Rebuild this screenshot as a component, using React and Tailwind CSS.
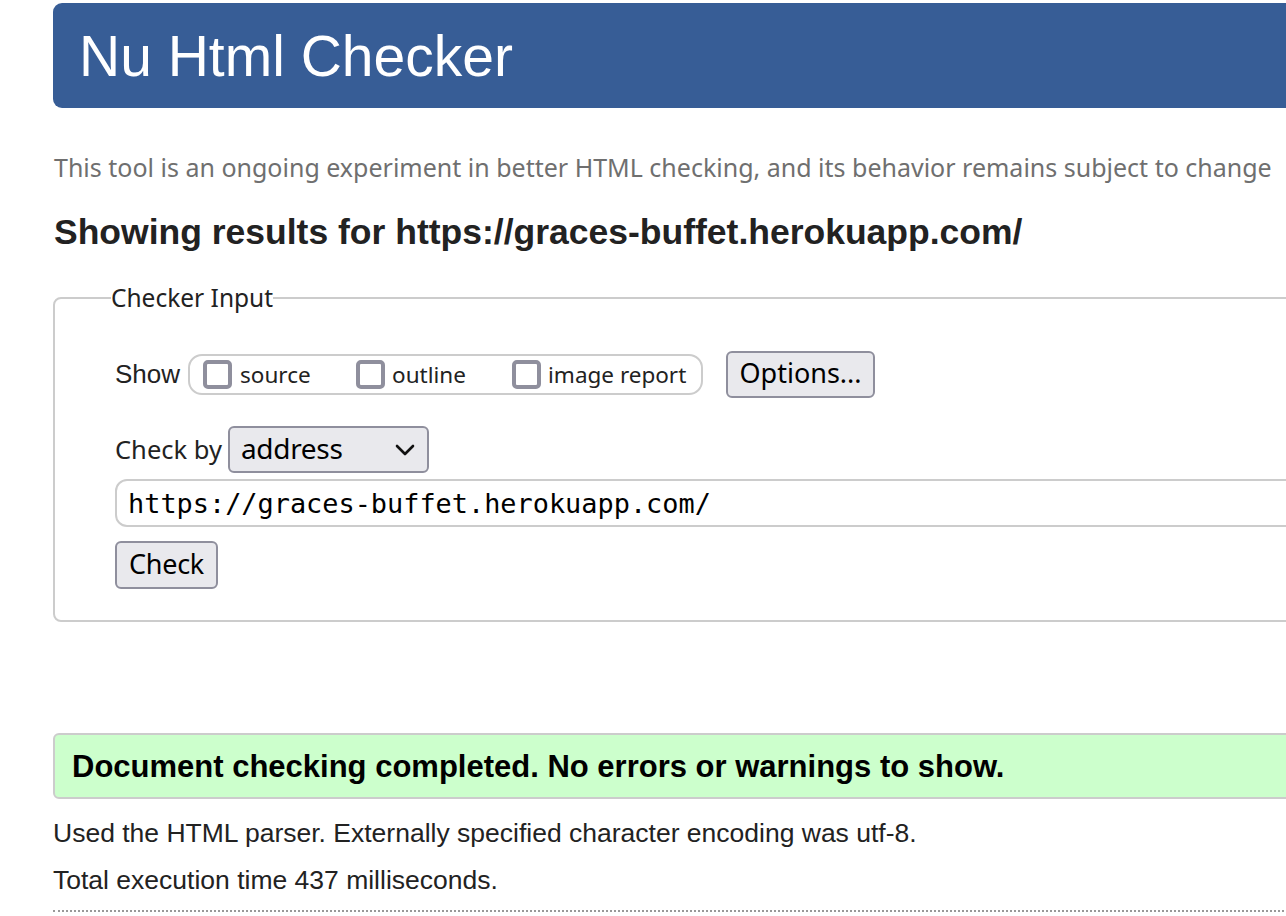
import React from "react";

function Box() {
  return (
    <span className="inline-block w-[29px] h-[29px] border-[4px] border-[#8f8f9d] rounded-[5px] bg-white shrink-0" />
  );
}

export default function App() {
  return (
    <div className="w-[1286px] h-[916px] overflow-hidden bg-white">
      <div className="pl-[53px] w-[1500px]">
        <div className="mt-[3px] h-[105px] bg-[#375d96] rounded-l-[9px] flex items-center pl-[26px]">
          <h1 className="text-white text-[57px] leading-none font-['Liberation_Sans',Arial,sans-serif] mt-[2px]">Nu Html Checker</h1>
        </div>

        <p className="mt-[42px] pl-px text-[#6f6f6f] text-[25px] leading-[34px] font-['Noto_Sans',sans-serif]">
          This tool is an ongoing experiment in better HTML checking, and its behavior remains subject to change
        </p>

        <h2 className="mt-[28px] pl-px text-[#222222] text-[35.5px] leading-[40px] font-bold font-['Liberation_Sans',Arial,sans-serif]">
          Showing results for https://graces-buffet.herokuapp.com/
        </h2>

        <fieldset className="mt-[30px] border-2 border-[#cccccc] rounded-l-[8px] pl-[60px] pr-4 h-[340px] font-['Noto_Sans',sans-serif]">
          <legend className="ml-[-4px] px-0 text-[24.5px] leading-[32px] text-[#222]">Checker Input</legend>

          <div className="mt-[37px] flex items-center">
            <span className="text-[26px] text-[#222] font-['Liberation_Sans',Arial,sans-serif] mr-[8px]">Show</span>
            <div className="h-[41px] w-[515px] border-2 border-[#cccccc] rounded-[14px] flex items-center pl-[13px]">
              <label className="flex items-center w-[153px]">
                <Box />
                <span className="ml-[8px] text-[22.5px] text-[#222]">source</span>
              </label>
              <label className="flex items-center w-[156px]">
                <Box />
                <span className="ml-[7px] text-[22.5px] text-[#222]">outline</span>
              </label>
              <label className="flex items-center">
                <Box />
                <span className="ml-[7px] text-[22.5px] text-[#222]">image report</span>
              </label>
            </div>
            <button className="ml-[23px] h-[47px] w-[149px] bg-[#e9e9ed] border-2 border-[#8f8f9d] rounded-[6px] text-[27px] text-black leading-none pb-[4px]">
              Options...
            </button>
          </div>

          <div className="mt-[28px] flex items-center">
            <span className="text-[25.5px] text-[#222] mr-[6px]">Check by</span>
            <div className="h-[47px] w-[201px] bg-[#e9e9ed] border-2 border-[#8f8f9d] rounded-[6px] flex items-center pl-[11px] pr-[12px] justify-between">
              <span className="text-[28px] text-black leading-none pb-[4px] tracking-[-0.3px]">address</span>
              <svg width="20" height="12" viewBox="0 0 20 12" fill="none">
                <path d="M2 2 L10 10 L18 2" stroke="#111" strokeWidth="2.6" strokeLinecap="round" strokeLinejoin="round" />
              </svg>
            </div>
          </div>

          <div className="mt-[6px] h-[48px] border-2 border-[#cccccc] rounded-l-[12px] flex items-center pl-[11px]">
            <span className="text-[26.9px] text-black font-['DejaVu_Sans_Mono',monospace] leading-none mt-[3px]">https://graces-buffet.herokuapp.com/</span>
          </div>

          <button className="mt-[14px] h-[48px] w-[103px] bg-[#e9e9ed] border-2 border-[#8f8f9d] rounded-[6px] text-[27px] text-black leading-none pb-[4px] tracking-[-0.3px]">
            Check
          </button>
        </fieldset>

        <div className="mt-[111px] h-[66px] bg-[#ccffcc] border-2 border-[#cccccc] rounded-l-[6px] flex items-center pl-[17px]">
          <span className="text-[31px] font-bold text-black font-['Liberation_Sans',Arial,sans-serif] mt-[3px]">
            Document checking completed. No errors or warnings to show.
          </span>
        </div>

        <p className="mt-[20px] text-[26.5px] leading-[28px] text-[#222] font-['Liberation_Sans',Arial,sans-serif]">
          Used the HTML parser. Externally specified character encoding was utf-8.
        </p>
        <p className="mt-[19px] text-[26.5px] leading-[28px] text-[#222] font-['Liberation_Sans',Arial,sans-serif]">
          Total execution time 437 milliseconds.
        </p>
        <div className="mt-[16px] border-t-2 border-dotted border-[#999999]" />
      </div>
    </div>
  );
}
